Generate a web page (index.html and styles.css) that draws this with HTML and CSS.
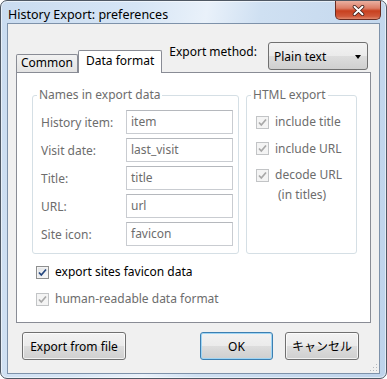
FILE: index.html
```html
<!DOCTYPE html>
<html lang="ja">
<head>
  <meta charset="UTF-8">
  <title>History Export: preferences</title>
  <link rel="stylesheet" href="styles.css">
</head>
<body>
  <div class="window">
    <div class="titlebar">
      <span class="title">History Export: preferences</span>
      <span class="close-btn">
        <svg width="13" height="11" viewBox="0 0 13 11">
          <path d="M2.5 1.8 L10.5 9.2 M10.5 1.8 L2.5 9.2" stroke="#3a1c17" stroke-width="3.6" stroke-linecap="round"/>
          <path d="M2.5 1.8 L10.5 9.2 M10.5 1.8 L2.5 9.2" stroke="#ffffff" stroke-width="2" stroke-linecap="round"/>
        </svg>
      </span>
    </div>

    <div class="client">
      <div class="tabbar">
        <div class="tab">Common</div>
        <div class="tab tab-active">Data format</div>
        <span class="method-label">Export method:</span>
        <div class="dropdown">
          <span>Plain text</span>
          <span class="dropdown-arrow"></span>
        </div>
      </div>

      <div class="panel">
        <div class="groups">
          <fieldset class="group group-names">
            <legend>Names in export data</legend>
            <div class="field-row"><span class="field-label">History item:</span><span class="field-input">item</span></div>
            <div class="field-row"><span class="field-label">Visit date:</span><span class="field-input">last_visit</span></div>
            <div class="field-row"><span class="field-label">Title:</span><span class="field-input">title</span></div>
            <div class="field-row"><span class="field-label">URL:</span><span class="field-input">url</span></div>
            <div class="field-row"><span class="field-label">Site icon:</span><span class="field-input">favicon</span></div>
          </fieldset>

          <fieldset class="group group-html">
            <legend>HTML export</legend>
            <div class="check-row disabled">
              <span class="checkbox"><svg width="11" height="11" viewBox="0 0 11 11"><path d="M2 5.5 L4.3 8 L9 2.5" fill="none" stroke="currentColor" stroke-width="1.7"/></svg></span>
              include title
            </div>
            <div class="check-row disabled">
              <span class="checkbox"><svg width="11" height="11" viewBox="0 0 11 11"><path d="M2 5.5 L4.3 8 L9 2.5" fill="none" stroke="currentColor" stroke-width="1.7"/></svg></span>
              include URL
            </div>
            <div class="check-row disabled">
              <span class="checkbox"><svg width="11" height="11" viewBox="0 0 11 11"><path d="M2 5.5 L4.3 8 L9 2.5" fill="none" stroke="currentColor" stroke-width="1.7"/></svg></span>
              decode URL
            </div>
            <div class="check-note">(in titles)</div>
          </fieldset>
        </div>

        <div class="check-row check-favicon">
          <span class="checkbox"><svg width="11" height="11" viewBox="0 0 11 11"><path d="M2 5.5 L4.3 8 L9 2.5" fill="none" stroke="currentColor" stroke-width="1.7"/></svg></span>
          export sites favicon data
        </div>
        <div class="check-row check-readable disabled">
          <span class="checkbox"><svg width="11" height="11" viewBox="0 0 11 11"><path d="M2 5.5 L4.3 8 L9 2.5" fill="none" stroke="currentColor" stroke-width="1.7"/></svg></span>
          human-readable data format
        </div>
      </div>

      <div class="buttons">
        <button class="btn btn-export">Export from file</button>
        <button class="btn btn-ok">OK</button>
        <button class="btn btn-cancel">キャンセル</button>
      </div>

      <svg class="grip" width="9" height="9" viewBox="0 0 9 9">
        <rect x="7" y="1" width="1" height="1" fill="#b4b8bd"/>
        <rect x="4" y="4" width="1" height="1" fill="#b4b8bd"/>
        <rect x="7" y="4" width="1" height="1" fill="#b4b8bd"/>
        <rect x="1" y="7" width="1" height="1" fill="#b4b8bd"/>
        <rect x="4" y="7" width="1" height="1" fill="#b4b8bd"/>
        <rect x="7" y="7" width="1" height="1" fill="#b4b8bd"/>
      </svg>
    </div>
  </div>
</body>
</html>
```

FILE: styles.css
```css
* {
  margin: 0;
  padding: 0;
  box-sizing: border-box;
}

body {
  width: 387px;
  height: 379px;
  overflow: hidden;
  background-color: #ffffff;
  font-family: "Noto Sans", "Noto Sans CJK JP", sans-serif;
  font-size: 12px;
  color: #000000;
}

/* window frame */
.window {
  width: 387px;
  height: 379px;
  display: flex;
  flex-direction: column;
  padding: 0 6px 6px;
  border: 1px solid #4f5864;
  border-radius: 7px;
  background: linear-gradient(100deg, #cadcf0 0%, #d6e5f5 30%, #e9f1fa 46%, #cfe0f2 58%, #bed3eb 100%);
  box-shadow: inset 0 0 0 1px rgba(255, 255, 255, 0.55);
}

.titlebar {
  height: 29px;
  display: flex;
  align-items: flex-start;
  justify-content: space-between;
}

.title {
  margin: 6px 0 0 1px;
  font-size: 12.5px;
  line-height: 16px;
}

.close-btn {
  width: 46px;
  height: 19px;
  margin-right: -1px;
  display: flex;
  align-items: center;
  justify-content: center;
  border: 1px solid #6a2c22;
  border-top: none;
  border-radius: 0 0 5px 5px;
  background: linear-gradient(#eab0a1 0%, #dc7d66 40%, #c8401f 55%, #d0583a 85%, #e08a6e 100%);
}

.client {
  position: relative;
  flex: 1;
  display: flex;
  flex-direction: column;
  padding: 9px 8px 13px;
  border: 1px solid #7e92aa;
  background-color: #f0f0f0;
}

/* tabs row */
.tabbar {
  display: flex;
  align-items: flex-end;
  height: 39px;
}

.tab {
  position: relative;
  height: 18px;
  padding: 0 4px;
  line-height: 16px;
  border: 1px solid #898c95;
  border-bottom: none;
  border-radius: 2px 2px 0 0;
  background: linear-gradient(#f2f2f2, #e3e3e3);
}

.tab-active {
  z-index: 1;
  height: 23px;
  margin-bottom: -1px;
  line-height: 19px;
  padding: 0 7px;
  background: #ffffff;
}

.method-label {
  align-self: center;
  margin: -2px 0 0 7px;
}

.dropdown {
  display: flex;
  align-items: center;
  justify-content: space-between;
  width: 100px;
  height: 28px;
  margin: 0 3px 2px auto;
  padding: 0 6px 0 5px;
  border: 1px solid #707070;
  border-radius: 3px;
  background: linear-gradient(#f2f2f2 0%, #ebebeb 50%, #dddddd 51%, #cfcfcf 100%);
}

.dropdown-arrow {
  width: 0;
  height: 0;
  border-left: 3.5px solid transparent;
  border-right: 3.5px solid transparent;
  border-top: 4px solid #000000;
  margin-top: 1px;
}

/* tab page */
.panel {
  height: 251px;
  padding: 14px 12px 0 15px;
  border: 1px solid #898c95;
  background-color: #ffffff;
}

.groups {
  display: grid;
  grid-template-columns: 207px 111px;
  gap: 7px;
}

.group {
  height: 167px;
  border: 1px solid #d5dfe5;
  border-radius: 3px;
  color: #6d6d6d;
}

.group legend {
  padding: 0 2px;
  line-height: 16px;
}

.group-names {
  padding: 7px 5px 0 8px;
  display: flex;
  flex-direction: column;
  gap: 4px;
}

.group-names legend {
  margin-left: -4px;
}

.field-row {
  display: flex;
  align-items: center;
  height: 24px;
}

.field-label {
  width: 85px;
}

.field-input {
  width: 107px;
  height: 24px;
  padding: 0 4px;
  line-height: 22px;
  border: 1px solid #c9ccd1;
  border-top-color: #b5b8bd;
  background-color: #ffffff;
}

.group-html {
  padding: 11px 4px 0 9px;
}

.group-html legend {
  margin-left: -5px;
}

.group-html .check-row + .check-row {
  margin-top: 10.5px;
}

.check-note {
  margin-top: 4px;
  padding-left: 22px;
  line-height: 16px;
}

/* checkboxes */
.check-row {
  display: flex;
  align-items: center;
  gap: 6px;
  line-height: 16px;
  white-space: nowrap;
}

.checkbox {
  width: 13px;
  height: 13px;
  flex: none;
  display: flex;
  align-items: center;
  justify-content: center;
  border: 1px solid #8e8f8f;
  background: linear-gradient(135deg, #dfe1e4, #fafafa);
  box-shadow: inset 0 0 0 1px #f3f3f3;
  color: #24467e;
}

.disabled {
  color: #6d6d6d;
}

.disabled .checkbox {
  border-color: #c2c4c6;
  background: #f4f4f4;
  box-shadow: none;
  color: #a8a8a8;
}

.check-favicon {
  margin: 10px 0 0 4px;
}

.check-readable {
  margin: 11px 0 0 4px;
}

/* dialog buttons */
.buttons {
  display: flex;
  margin-top: 9px;
  padding: 0 12px 0 6px;
}

.btn {
  height: 28px;
  font-family: inherit;
  font-size: 12px;
  color: #000000;
  border: 1px solid #707070;
  border-radius: 3px;
  background: linear-gradient(#f2f2f2 0%, #ebebeb 50%, #dddddd 51%, #cfcfcf 100%);
  box-shadow: inset 0 0 0 1px rgba(255, 255, 255, 0.7);
}

.btn-export {
  width: 104px;
}

.btn-ok {
  width: 73px;
  margin-left: auto;
  border-color: #3c7fb1;
  box-shadow: inset 0 0 0 1px #9fd5f4;
}

.btn-cancel {
  width: 74px;
  margin-left: 12px;
}

.grip {
  position: absolute;
  right: 1px;
  bottom: 1px;
}
```
